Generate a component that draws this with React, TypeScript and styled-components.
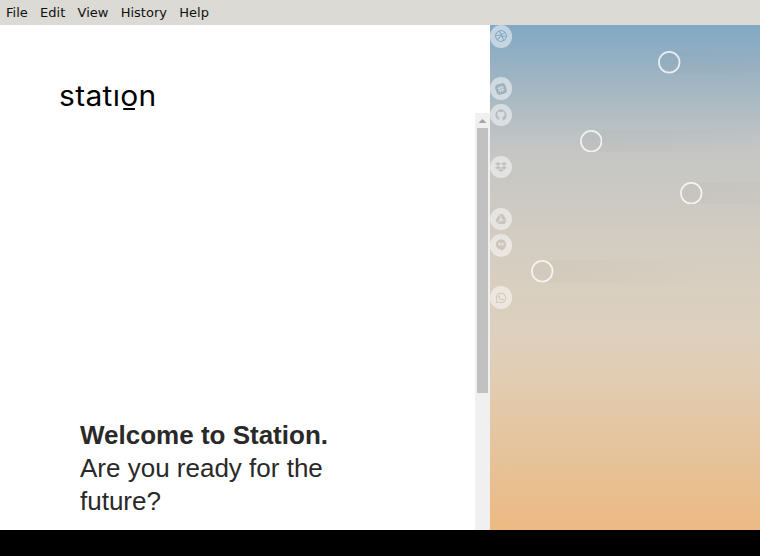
import React from "react";
import styled, { createGlobalStyle } from "styled-components";
import { FaDribbble, FaDropbox, FaWhatsapp } from "react-icons/fa";

const GlobalStyle = createGlobalStyle`
  * { box-sizing: border-box; }
  body { margin: 0; background: #000; overflow: hidden; }
`;

const Window = styled.div`
  display: flex;
  flex-direction: column;
  width: 760px;
  height: 530px;
  overflow: hidden;
  background: #fff;
`;

const MenuBar = styled.nav`
  display: flex;
  flex: 0 0 25px;
  gap: 12.3px;
  padding-left: 6px;
  background: #dbdad5;
  color: #111;
  font: 13px/25px "DejaVu Sans", sans-serif;
`;

const Content = styled.main`
  display: flex;
  flex: 1;
  min-height: 0;
`;

const WelcomePane = styled.section`
  display: flex;
  flex-direction: column;
  width: 475px;
  padding: 54px 60px 0 58.5px;
`;

const Logo = styled.div`
  height: 34px;
  color: #000;
  font: 400 28px/34px Inter, sans-serif;
  letter-spacing: 0.3px;
  white-space: nowrap;
  transform: scaleX(1.07);
  transform-origin: left;
`;

const Underlined = styled.span`
  display: inline-block;
  height: 31px;
  background: linear-gradient(#000, #000) 3px 100% / 11.2px 2px no-repeat;
`;

const Greeting = styled.h1`
  width: 290px;
  margin: 306px 0 0 21.5px;
  color: #292929;
  font: 400 26px/33px "Liberation Sans", Arial, sans-serif;
`;

const ScrollTrack = styled.div`
  display: flex;
  flex-direction: column;
  align-items: center;
  width: 15px;
  margin-top: 88px;
  background: #f0f0f0;
`;

const ScrollArrow = styled.svg`
  display: block;
  width: 15px;
  height: 15px;
`;

const ScrollThumb = styled.div`
  width: 11px;
  height: 265px;
  background: #c1c1c1;
`;

const Sky = styled.aside`
  width: 270px;
  overflow: hidden;
  background: linear-gradient(
    #82a8c4 0,
    #a2b6c3 60px,
    #b8c0c3 100px,
    #c5c6c4 125px,
    #cbc9c3 170px,
    #d3ccc1 215px,
    #d9cfc0 260px,
    #ddd0be 310px,
    #e2ccb2 357px,
    #e6c39a 430px,
    #eabd8d 475px,
    #edba82 505px
  );
`;

const Lanes = styled.div`
  margin-top: -1.6px;
`;

const Lane = styled.div<{ $offset?: number }>`
  display: flex;
  align-items: center;
  height: 26.12px;
  padding-left: ${(p) => p.$offset ?? 0}px;
`;

const Badge = styled.div`
  display: flex;
  align-items: center;
  justify-content: center;
  width: 22.4px;
  height: 22.4px;
  border-radius: 50%;
  background: #fff;
  opacity: 0.5;
`;

const BadgeGlyph = styled.div<{ $color: string }>`
  display: flex;
  color: ${(p) => p.$color};
  svg { display: block; width: 12px; height: 12px; }
`;

const Trail = styled.div`
  flex: 0 0 180px;
  height: 22.5px;
  border-radius: 11px 0 0 11px;
  background: linear-gradient(90deg, rgba(100, 100, 90, 0.045), rgba(100, 100, 90, 0));
`;

const Ring = styled.svg`
  display: block;
  width: 22.5px;
  height: 22.5px;
  fill: none;
  stroke: #fff;
  stroke-width: 1.7;
  stroke-opacity: 0.8;
`;

const SlackGlyph = () => (
  <svg viewBox="0 0 24 24">
    <g transform="rotate(-18 12 12)">
      <rect x="1.5" y="1.5" width="21" height="21" rx="6.5" fill="currentColor" />
      <path d="M9.5 6.500v11M14.500 6.500v11M6.500 9.500h11M6.500 14.500h11" stroke="#fff" strokeWidth="2.2" strokeLinecap="round" />
    </g>
  </svg>
);

const GithubGlyph = () => (
  <svg viewBox="0 0 24 24" fill="currentColor">
    <path
      fillRule="evenodd"
      d="M12 .8C5.700.8.800 5.800.800 12c0 5 3.200 9.200 7.700 10.700V19c-2.800.5-3.700-.8-4.500-2.500 2 .2 2 1.700 4.600 1.300.1-.8.500-1.300.9-1.600-3.500-.5-5.200-2-5.200-5.200 0-1.300.5-2.400 1.200-3.200-.3-1-.2-2.300.2-3.300 1.200 0 2.400.7 3.400 1.400a12 12 0 0 1 5.800 0c1-.7 2.200-1.400 3.400-1.400.4 1 .5 2.300.2 3.300.7.8 1.200 1.900 1.200 3.200 0 3.200-1.700 4.700-5.200 5.200.6.500 1 1.300 1 2.500v5c4.500-1.500 7.700-5.700 7.700-10.700C23.200 5.800 18.300.8 12 .8z"
    />
  </svg>
);

const DriveGlyph = () => (
  <svg viewBox="0 0 24 24" fill="currentColor">
    <path d="M8.200 2h7.600l7.200 12.500h-7.600zM7.300 3.600 11 10.200 4.700 21 1 14.500zM9.400 15.700H23L19.400 22H6.200z" />
  </svg>
);

const HangoutsGlyph = () => (
  <svg viewBox="0 0 24 24">
    <path d="M12 .5a10.300 10.300 0 0 0 0 20.600V24c5.500-2.700 10.300-7.200 10.300-13.200A10.300 10.300 0 0 0 12 .5z" fill="currentColor" />
    <path d="M7 7.500h4v4L9.400 14H7.800L9 11.500H7zm6 0h4v4L15.400 14h-1.600l1.200-2.500h-2z" fill="#fff" />
  </svg>
);

type LaneItem =
  | { kind: "badge"; icon: React.ReactNode; color: string }
  | { kind: "ring"; offset: number };

const lanes: LaneItem[] = [
  { kind: "badge", icon: <FaDribbble />, color: "#739bb9" },
  { kind: "ring", offset: 168 },
  { kind: "badge", icon: <SlackGlyph />, color: "#98abb7" },
  { kind: "badge", icon: <GithubGlyph />, color: "#b0babf" },
  { kind: "ring", offset: 89.5 },
  { kind: "badge", icon: <FaDropbox />, color: "#bdbdb9" },
  { kind: "ring", offset: 190.4 },
  { kind: "badge", icon: <DriveGlyph />, color: "#c3c0b8" },
  { kind: "badge", icon: <HangoutsGlyph />, color: "#c8c1b5" },
  { kind: "ring", offset: 41 },
  { kind: "badge", icon: <FaWhatsapp />, color: "#cbbfad" },
];

export default function App() {
  return (
    <>
      <GlobalStyle />
      <Window>
        <MenuBar>
          {["File", "Edit", "View", "History", "Help"].map((label) => (
            <span key={label}>{label}</span>
          ))}
        </MenuBar>
        <Content>
          <WelcomePane>
            <Logo>
              statı<Underlined>o</Underlined>n
            </Logo>
            <Greeting>
              <b>Welcome to Station.</b>
              <br />
              Are you ready for the future?
            </Greeting>
          </WelcomePane>
          <ScrollTrack>
            <ScrollArrow viewBox="0 0 15 15">
              <path d="M3.500 10 7.500 6l4 4z" fill="#a3a3a3" />
            </ScrollArrow>
            <ScrollThumb />
          </ScrollTrack>
          <Sky>
            <Lanes>
              {lanes.map((item, i) => (
                <Lane key={i} $offset={item.kind === "ring" ? item.offset : 0}>
                  {item.kind === "badge" ? (
                    <Badge>
                      <BadgeGlyph $color={item.color}>{item.icon}</BadgeGlyph>
                    </Badge>
                  ) : (
                    <Trail>
                      <Ring viewBox="0 0 22.5 22.5">
                        <circle cx="11.25" cy="11.25" r="10.3" />
                      </Ring>
                    </Trail>
                  )}
                </Lane>
              ))}
            </Lanes>
          </Sky>
        </Content>
      </Window>
    </>
  );
}
